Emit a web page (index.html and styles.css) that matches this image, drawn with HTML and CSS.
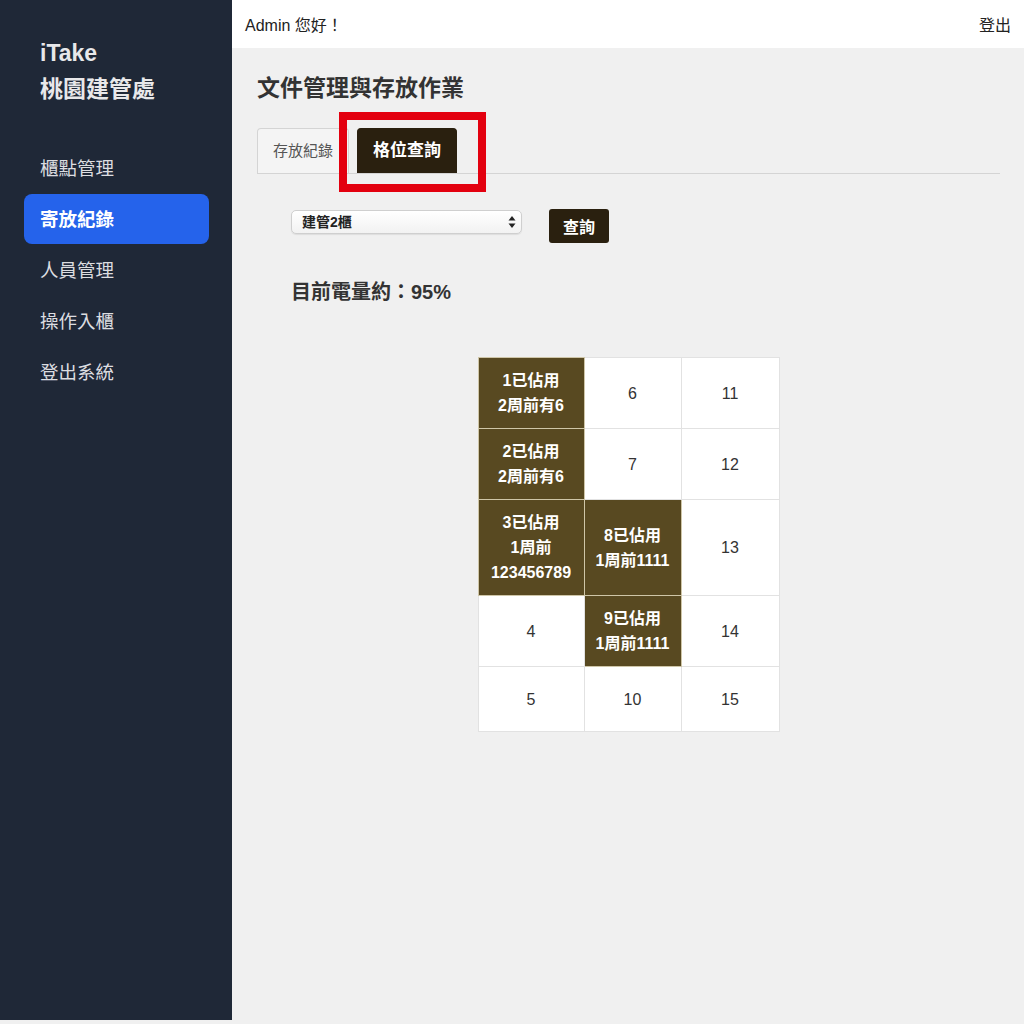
FILE: index.html
```html
<!DOCTYPE html>
<html lang="zh-Hant">
<head>
    <meta charset="UTF-8">
    <meta name="viewport" content="width=device-width, initial-scale=1.0">
    <title>iTake 桃園建管處</title>
    <link rel="stylesheet" href="styles.css">
</head>
<body>

<div class="layout">
    <aside class="sidebar">
        <div class="brand">iTake<br>桃園建管處</div>
        <nav class="menu">
            <a href="#" class="menu-item">櫃點管理</a>
            <a href="#" class="menu-item active">寄放紀錄</a>
            <a href="#" class="menu-item">人員管理</a>
            <a href="#" class="menu-item">操作入櫃</a>
            <a href="#" class="menu-item">登出系統</a>
        </nav>
    </aside>

    <div class="main">
        <header class="topbar">
            <span>Admin 您好！</span>
            <a href="#" class="logout">登出</a>
        </header>

        <section class="content">
            <h1>文件管理與存放作業</h1>

            <div class="tabs">
                <a href="#" class="tab">存放紀錄</a>
                <a href="#" class="tab active">格位查詢</a>
                <div class="highlight"></div>
            </div>

            <div class="query-row">
                <div class="select-wrap">
                    <select id="cabinet">
                        <option>建管2櫃</option>
                        <option>建管1櫃</option>
                    </select>
                    <svg class="select-arrows" width="8" height="14" viewBox="0 0 8 14">
                        <path d="M4 1 L7.5 5.5 L0.5 5.5 Z" fill="#222"/>
                        <path d="M4 13 L7.5 8.5 L0.5 8.5 Z" fill="#222"/>
                    </svg>
                </div>
                <button type="button" class="btn-query">查詢</button>
            </div>

            <p class="battery">目前電量約：95%</p>

            <table class="slots">
                <colgroup>
                    <col style="width: 106px">
                    <col style="width: 97px">
                    <col style="width: 98px">
                </colgroup>
                <tr>
                    <td class="used">1已佔用<br>2周前有6</td>
                    <td>6</td>
                    <td>11</td>
                </tr>
                <tr>
                    <td class="used">2已佔用<br>2周前有6</td>
                    <td>7</td>
                    <td>12</td>
                </tr>
                <tr>
                    <td class="used">3已佔用<br>1周前<br>123456789</td>
                    <td class="used">8已佔用<br>1周前1111</td>
                    <td>13</td>
                </tr>
                <tr>
                    <td>4</td>
                    <td class="used">9已佔用<br>1周前1111</td>
                    <td>14</td>
                </tr>
                <tr>
                    <td>5</td>
                    <td>10</td>
                    <td>15</td>
                </tr>
            </table>
        </section>
    </div>
</div>

</body>
</html>
```

FILE: styles.css
```css
body {
    margin: 0;
    padding: 0;
    font-family: "Liberation Sans", "Noto Sans CJK TC", sans-serif;
    background-color: #f0f0f0;
    color: #333;
}
.layout {
    display: flex;
    min-height: 1020px;
}
.sidebar {
    width: 232px;
    flex-shrink: 0;
    background-color: #1f2837;
    padding: 35px 23px 0 24px;
    box-sizing: border-box;
}
.brand {
    color: #e8e8ea;
    font-size: 23px;
    font-weight: bold;
    line-height: 36px;
    padding-left: 16px;
    margin-bottom: 36px;
}
.menu {
    display: flex;
    flex-direction: column;
    gap: 1px;
}
.menu-item {
    display: block;
    height: 50px;
    line-height: 52px;
    padding-left: 16px;
    color: #dcdde0;
    font-size: 18.5px;
    text-decoration: none;
    border-radius: 8px;
}
.menu-item.active {
    background-color: #2563eb;
    color: #fff;
    font-weight: bold;
}
.main {
    flex: 1;
    display: flex;
    flex-direction: column;
}
.topbar {
    height: 48px;
    background: #fff;
    display: flex;
    align-items: center;
    justify-content: space-between;
    padding: 0 13px;
    font-size: 16px;
    color: #222;
}
.logout {
    color: #222;
    text-decoration: none;
    font-size: 16px;
}
.content {
    padding: 24px 24px 24px 25px;
}
h1 {
    margin: 0 0 24px;
    font-size: 23px;
    line-height: 32px;
    font-weight: 600;
    color: #333;
}
.tabs {
    position: relative;
    display: flex;
    gap: 8px;
    border-bottom: 1px solid #d4d4d4;
    height: 45px;
}
.tab {
    display: block;
    padding: 0 15px;
    line-height: 44px;
    font-size: 15px;
    color: #555;
    text-decoration: none;
    border: 1px solid #d4d4d4;
    border-bottom: none;
    border-radius: 4px 4px 0 0;
    background: #f4f4f4;
}
.tab.active {
    background-color: #2a200f;
    border-color: #2a200f;
    color: #fff;
    font-weight: bold;
    padding: 0 15px;
    font-size: 17px;
}
.highlight {
    position: absolute;
    left: 82px;
    top: -16px;
    width: 147px;
    height: 80px;
    border: 8px solid #e3000f;
    box-sizing: border-box;
}
.query-row {
    display: flex;
    align-items: flex-start;
    gap: 27px;
    margin: 35px 0 0 34px;
}
.select-wrap {
    position: relative;
    margin-top: 1px;
}
.select-wrap select {
    appearance: none;
    -webkit-appearance: none;
    width: 231px;
    height: 24px;
    padding: 0 10px;
    font-family: inherit;
    font-size: 14px;
    font-weight: bold;
    color: #222;
    border: 1px solid #cfcfcf;
    border-radius: 5px;
    background: linear-gradient(#ffffff, #f2f2f2);
    box-shadow: 0 1px 1px rgba(0, 0, 0, 0.08);
}
.select-arrows {
    position: absolute;
    right: 6px;
    top: 5px;
    pointer-events: none;
}
.btn-query {
    height: 34px;
    width: 60px;
    background-color: #2a200f;
    color: #fff;
    border: none;
    border-radius: 3px;
    font-family: inherit;
    font-size: 16px;
    font-weight: bold;
    cursor: pointer;
}
.battery {
    margin: 35px 0 0 34px;
    font-size: 20px;
    line-height: 28px;
    font-weight: 600;
    color: #333;
}
.slots {
    margin: 51px auto 0;
    border-collapse: collapse;
    table-layout: fixed;
    background: #fff;
}
.slots td {
    border: 1px solid #e2e2e2;
    text-align: center;
    vertical-align: middle;
    height: 44px;
    padding: 10px 0;
    font-size: 16px;
    line-height: 25px;
    color: #333;
}
.slots td.used {
    background-color: #584921;
    border-color: #cfc6a8;
    color: #fff;
    font-weight: 600;
}
```
